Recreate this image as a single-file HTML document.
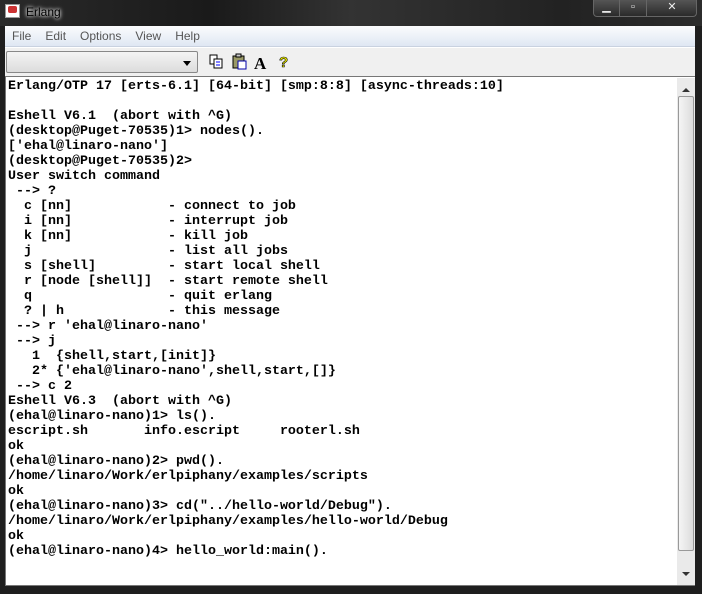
<!DOCTYPE html>
<html><head><style>
*{margin:0;padding:0;box-sizing:border-box}
body{width:702px;height:594px;overflow:hidden;background:#1e1e1e;position:relative;font-family:"Liberation Sans",sans-serif}
.title{position:absolute;left:0;top:0;width:702px;height:26px;background:linear-gradient(90deg,#2a2a2a,#1a1a1a 30%,#333 50%,#222 80%,#2c2c2c)}
.title .t{position:absolute;left:26px;top:5px;color:#000;font-size:12px;text-shadow:0 0 3px #fff,0 0 5px #ddd}
.logo{position:absolute;left:5px;top:4px;width:15px;height:14px;background:#fff;border:1px solid #999}
.logo:before{content:"";position:absolute;left:2px;top:1px;width:9px;height:7px;background:#c33;border-radius:2px}
.btns{position:absolute;left:593px;top:0;width:104px;height:17px;border:1px solid #666;border-top:none;border-radius:0 0 4px 4px;background:linear-gradient(#555,#2a2a2a)}
.btns span{position:absolute;top:0;height:16px;color:#eee;font-size:11px;text-align:center;line-height:15px;border-right:1px solid #666}
.client{position:absolute;left:5px;top:26px;width:690px;height:560px;background:#f0f0f0}
.menu{height:21px;background:linear-gradient(#fbfcfd,#dfe7f3);border-bottom:1px solid #c9d2e0;font-size:12px;color:#555;padding-left:7px;line-height:21px}
.menu span{margin-right:14px}
.tool{position:absolute;top:21px;left:0;width:690px;height:29px;background:#f0f0f0;border-top:1px solid #fff}
.combo{position:absolute;left:1px;top:3px;width:192px;height:22px;border:1px solid #888;border-radius:2px;background:linear-gradient(#f4f4f4,#dcdcdc)}
.combo:after{content:"";position:absolute;right:6px;top:9px;border:4px solid transparent;border-top:5px solid #000}
.term{position:absolute;left:0;top:50px;width:690px;height:510px;background:#fff;border:1px solid #777;border-right:none}
pre{position:absolute;left:2px;top:2px;font-family:"Liberation Mono",monospace;font-weight:bold;font-size:13.33px;line-height:15px;color:#000}
.sb{position:absolute;left:671px;top:1px;width:18px;height:507px;background:#eaeaea}
.thumb{position:absolute;left:1px;top:18px;width:16px;height:455px;border:1px solid #999;border-radius:2px;background:linear-gradient(90deg,#f5f5f5,#dcdcdc)}
</style></head><body>
<div class="title"><div class="logo"></div><div class="t">Erlang</div>
<div class="btns"><span style="left:0;width:26px">▁</span><span style="left:26px;width:27px">▫</span><span style="left:53px;width:50px;border:none">✕</span></div></div>
<div class="client">
<div class="menu"><span>File</span><span>Edit</span><span>Options</span><span>View</span><span>Help</span></div>
<div class="tool"><div class="combo"></div>
<svg style="position:absolute;left:204px;top:4px" width="100" height="20">
<rect x="1" y="3" width="7" height="9" fill="#fff" stroke="#000"/><rect x="5" y="7" width="8" height="9" fill="#fff" stroke="#000"/><line x1="7" y1="10" x2="11" y2="10" stroke="#00f"/><line x1="7" y1="13" x2="11" y2="13" stroke="#00f"/>
<rect x="24" y="4" width="11" height="12" fill="#996" stroke="#000"/><rect x="27" y="2" width="5" height="3" fill="#ccc" stroke="#000"/><rect x="29" y="9" width="8" height="8" fill="#fff" stroke="#00a"/>
<text x="45" y="17" font-family="Liberation Serif" font-weight="bold" font-size="17">A</text>
<text x="70" y="15" font-family="Liberation Sans" font-weight="bold" font-size="15" fill="#ee0" stroke="#000" stroke-width=".6">?</text></svg>
</div>
<div class="term">
<pre>Erlang/OTP 17 [erts-6.1] [64-bit] [smp:8:8] [async-threads:10]

Eshell V6.1  (abort with ^G)
(desktop@Puget-70535)1&gt; nodes().
['ehal@linaro-nano']
(desktop@Puget-70535)2&gt;
User switch command
 --&gt; ?
  c [nn]            - connect to job
  i [nn]            - interrupt job
  k [nn]            - kill job
  j                 - list all jobs
  s [shell]         - start local shell
  r [node [shell]]  - start remote shell
  q                 - quit erlang
  ? | h             - this message
 --&gt; r 'ehal@linaro-nano'
 --&gt; j
   1  {shell,start,[init]}
   2* {'ehal@linaro-nano',shell,start,[]}
 --&gt; c 2
Eshell V6.3  (abort with ^G)
(ehal@linaro-nano)1&gt; ls().
escript.sh       info.escript     rooterl.sh
ok
(ehal@linaro-nano)2&gt; pwd().
/home/linaro/Work/erlpiphany/examples/scripts
ok
(ehal@linaro-nano)3&gt; cd("../hello-world/Debug").
/home/linaro/Work/erlpiphany/examples/hello-world/Debug
ok
(ehal@linaro-nano)4&gt; hello_world:main().</pre>
<div class="sb"><div style="position:absolute;left:5px;top:6px;border:4px solid transparent;border-bottom:4px solid #333"></div><div class="thumb"></div><div style="position:absolute;left:5px;bottom:5px;border:4px solid transparent;border-top:4px solid #333"></div></div>
</div></div>
</body></html>
